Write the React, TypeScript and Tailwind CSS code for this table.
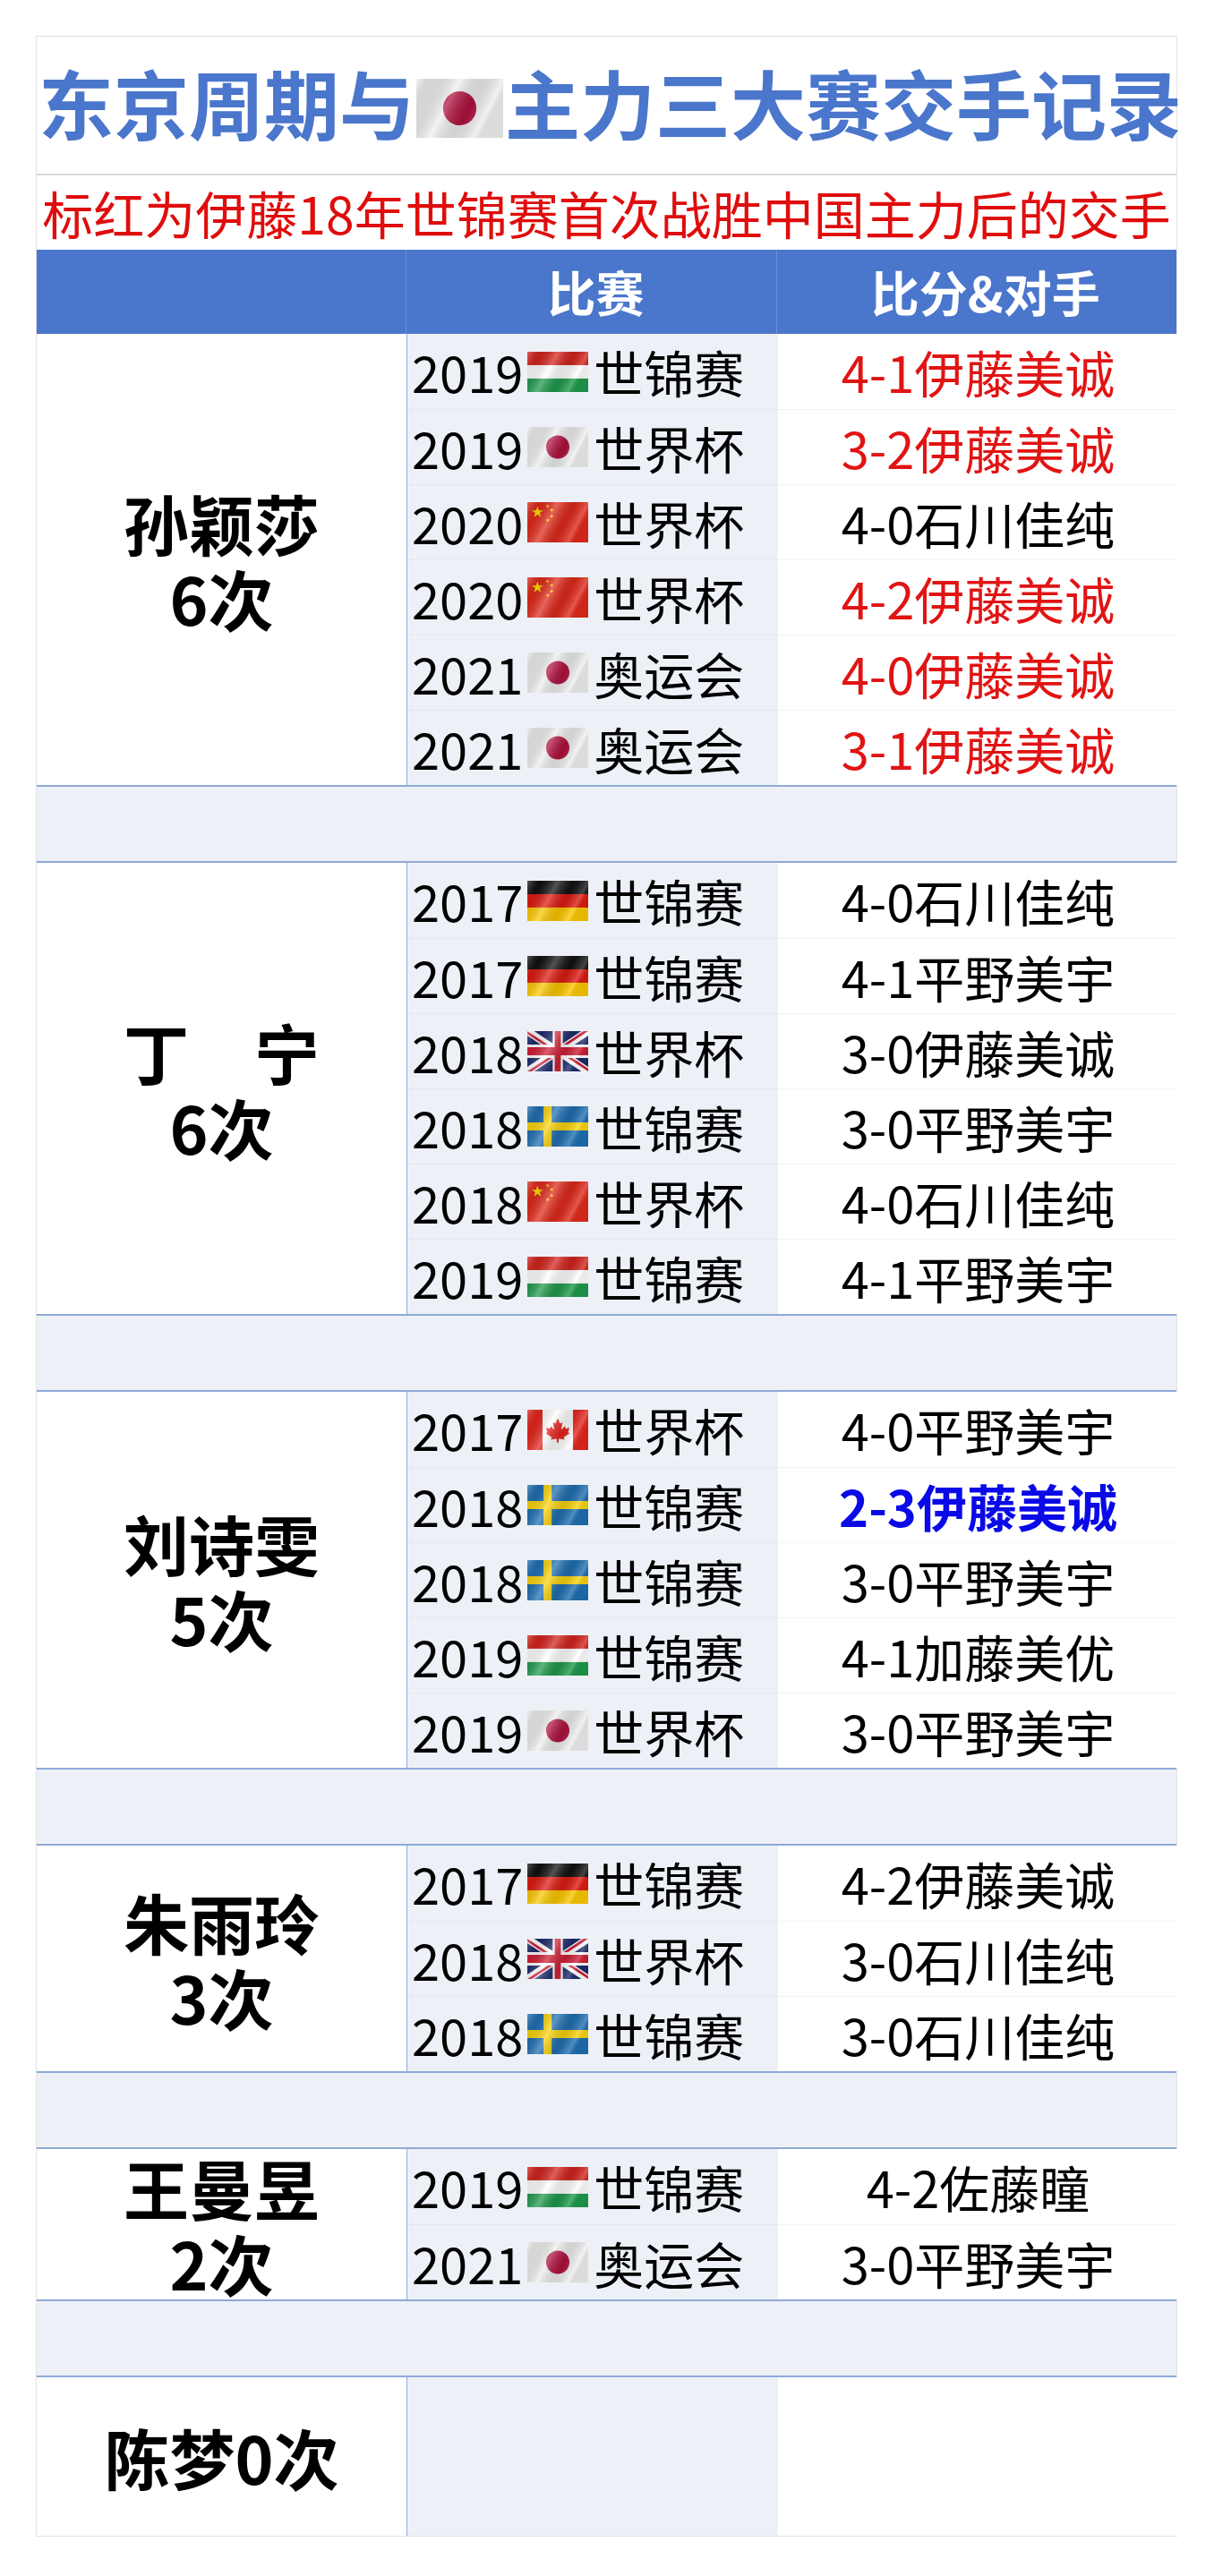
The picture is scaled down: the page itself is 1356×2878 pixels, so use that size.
import { useId } from "react";

type FlagCode = "hu" | "jp" | "cn" | "de" | "gb" | "se" | "ca";

type Match = {
  year: string;
  flag: FlagCode;
  event: string;
  score: string;
  tone?: "red" | "blue";
};

type Player = {
  name: string[];
  matches: Match[];
};

const players: Player[] = [
  {
    name: ["孙颖莎", "6次"],
    matches: [
      { year: "2019", flag: "hu", event: "世锦赛", score: "4-1伊藤美诚", tone: "red" },
      { year: "2019", flag: "jp", event: "世界杯", score: "3-2伊藤美诚", tone: "red" },
      { year: "2020", flag: "cn", event: "世界杯", score: "4-0石川佳纯" },
      { year: "2020", flag: "cn", event: "世界杯", score: "4-2伊藤美诚", tone: "red" },
      { year: "2021", flag: "jp", event: "奥运会", score: "4-0伊藤美诚", tone: "red" },
      { year: "2021", flag: "jp", event: "奥运会", score: "3-1伊藤美诚", tone: "red" },
    ],
  },
  {
    name: ["丁\u3000宁", "6次"],
    matches: [
      { year: "2017", flag: "de", event: "世锦赛", score: "4-0石川佳纯" },
      { year: "2017", flag: "de", event: "世锦赛", score: "4-1平野美宇" },
      { year: "2018", flag: "gb", event: "世界杯", score: "3-0伊藤美诚" },
      { year: "2018", flag: "se", event: "世锦赛", score: "3-0平野美宇" },
      { year: "2018", flag: "cn", event: "世界杯", score: "4-0石川佳纯" },
      { year: "2019", flag: "hu", event: "世锦赛", score: "4-1平野美宇" },
    ],
  },
  {
    name: ["刘诗雯", "5次"],
    matches: [
      { year: "2017", flag: "ca", event: "世界杯", score: "4-0平野美宇" },
      { year: "2018", flag: "se", event: "世锦赛", score: "2-3伊藤美诚", tone: "blue" },
      { year: "2018", flag: "se", event: "世锦赛", score: "3-0平野美宇" },
      { year: "2019", flag: "hu", event: "世锦赛", score: "4-1加藤美优" },
      { year: "2019", flag: "jp", event: "世界杯", score: "3-0平野美宇" },
    ],
  },
  {
    name: ["朱雨玲", "3次"],
    matches: [
      { year: "2017", flag: "de", event: "世锦赛", score: "4-2伊藤美诚" },
      { year: "2018", flag: "gb", event: "世界杯", score: "3-0石川佳纯" },
      { year: "2018", flag: "se", event: "世锦赛", score: "3-0石川佳纯" },
    ],
  },
  {
    name: ["王曼昱", "2次"],
    matches: [
      { year: "2019", flag: "hu", event: "世锦赛", score: "4-2佐藤瞳" },
      { year: "2021", flag: "jp", event: "奥运会", score: "3-0平野美宇" },
    ],
  },
];

function star(cx: number, cy: number, r: number) {
  return Array.from({ length: 10 }, (_, i) => {
    const a = -Math.PI / 2 + (i * Math.PI) / 5;
    const rr = i % 2 ? r * 0.382 : r;
    return `${(cx + rr * Math.cos(a)).toFixed(2)},${(cy + rr * Math.sin(a)).toFixed(2)}`;
  }).join(" ");
}

function Flag({ code, w = 68, h = 45 }: { code: FlagCode; w?: number; h?: number }) {
  const id = useId().replace(/:/g, "");
  return (
    <svg width={w} height={h} viewBox="0 0 60 40" preserveAspectRatio="none" className="shrink-0">
      <defs>
        <linearGradient id={`wave${id}`} x1="0" y1="0" x2="1" y2="0.35">
          <stop offset="0" stopColor="#fff" stopOpacity="0.3" />
          <stop offset="0.2" stopColor="#000" stopOpacity="0.1" />
          <stop offset="0.45" stopColor="#fff" stopOpacity="0.28" />
          <stop offset="0.7" stopColor="#000" stopOpacity="0.12" />
          <stop offset="0.9" stopColor="#fff" stopOpacity="0.22" />
          <stop offset="1" stopColor="#000" stopOpacity="0.08" />
        </linearGradient>
        <clipPath id={`s${id}`}>
          <path d="M0,0 v30 h60 v-30 z" />
        </clipPath>
        <clipPath id={`t${id}`}>
          <path d="M30,15 h30 v15 z v15 h-30 z h-30 v-15 z v-15 h30 z" />
        </clipPath>
      </defs>
      {code === "hu" && (
        <>
          <rect x="0" y="0" width="60" height="13.4" fill="#d3231c" />
          <rect x="0" y="13.3" width="60" height="13.4" fill="#ffffff" />
          <rect x="0" y="26.6" width="60" height="13.4" fill="#1e9a4c" />
        </>
      )}
      {code === "de" && (
        <>
          <rect x="0" y="0" width="60" height="13.4" fill="#111111" />
          <rect x="0" y="13.3" width="60" height="13.4" fill="#dd1a10" />
          <rect x="0" y="26.6" width="60" height="13.4" fill="#fcc800" />
        </>
      )}
      {code === "jp" && (
        <>
          <rect x="0" y="0" width="60" height="40" fill="#efefef" />
          <circle cx="30" cy="20" r="11.5" fill="#b0113e" />
        </>
      )}
      {code === "cn" && (
        <>
          <rect x="0" y="0" width="60" height="40" fill="#e0291a" />
          <polygon points={star(10, 10, 6)} fill="#ffdd00" />
          <polygon points={star(20, 4, 2)} fill="#ffdd00" />
          <polygon points={star(24, 8, 2)} fill="#ffdd00" />
          <polygon points={star(24, 14, 2)} fill="#ffdd00" />
          <polygon points={star(20, 18, 2)} fill="#ffdd00" />
        </>
      )}
      {code === "se" && (
        <>
          <rect x="0" y="0" width="60" height="40" fill="#1f6fb2" />
          <rect x="16" y="0" width="8" height="40" fill="#fbd40c" />
          <rect x="0" y="16" width="60" height="8" fill="#fbd40c" />
        </>
      )}
      {code === "ca" && (
        <>
          <rect x="0" y="0" width="60" height="40" fill="#ffffff" />
          <rect x="0" y="0" width="15" height="40" fill="#e5251d" />
          <rect x="45" y="0" width="15" height="40" fill="#e5251d" />
          <path
            transform="translate(30,20) scale(1.15)"
            d="M0,-10 L2,-5.5 L4,-6.5 L3,0 L6,-3 L7,-1 L10,-2 L9,2 L10,3 L5,6.5 L6,8.5 L1,7.5 L0.6,11 L-0.6,11 L-1,7.5 L-6,8.5 L-5,6.5 L-10,3 L-9,2 L-10,-2 L-7,-1 L-6,-3 L-3,0 L-4,-6.5 L-2,-5.5 Z"
            fill="#e5251d"
          />
        </>
      )}
      {code === "gb" && (
        <g transform="scale(1,1.3333)">
          <g clipPath={`url(#s${id})`}>
            <path d="M0,0 v30 h60 v-30 z" fill="#1c2a6b" />
            <path d="M0,0 L60,30 M60,0 L0,30" stroke="#fff" strokeWidth="6" />
            <path d="M0,0 L60,30 M60,0 L0,30" clipPath={`url(#t${id})`} stroke="#cf1f36" strokeWidth="4" />
            <path d="M30,0 v30 M0,15 h60" stroke="#fff" strokeWidth="10" />
            <path d="M30,0 v30 M0,15 h60" stroke="#cf1f36" strokeWidth="6" />
          </g>
        </g>
      )}
      <rect x="0" y="0" width="60" height="40" fill={`url(#wave${id})`} />
    </svg>
  );
}

function Block({ player }: { player: Player }) {
  return (
    <div className="flex">
      <div className="w-[414px] shrink-0 flex items-center justify-center border-r border-[#8ea7d4] bg-white">
        <div className="text-center text-[73px] font-bold leading-[84px] text-black whitespace-nowrap">
          {player.name[0]}
          <br />
          {player.name[1]}
        </div>
      </div>
      <div className="w-[414px] shrink-0 flex flex-col bg-[#edf1f7]">
        {player.matches.map((m, i) => (
          <div
            key={i}
            className={`h-[84px] flex items-center pl-[5px] text-[56px] leading-none text-black whitespace-nowrap ${
              i > 0 ? "border-t border-[#e3e8f0]" : ""
            }`}
          >
            <span>{m.year}</span>
            <span className="ml-[5px] mr-[6px] flex">
              <Flag code={m.flag} />
            </span>
            <span>{m.event}</span>
          </div>
        ))}
      </div>
      <div className="w-[447px] shrink-0 flex flex-col bg-white">
        {player.matches.map((m, i) => (
          <div
            key={i}
            className={`h-[84px] flex items-center justify-center text-[56px] leading-none whitespace-nowrap ${
              i > 0 ? "border-t border-[#f3f4f6]" : ""
            } ${
              m.tone === "red"
                ? "text-[#e11414]"
                : m.tone === "blue"
                  ? "text-[#0a0ae6] font-bold"
                  : "text-black"
            }`}
          >
            {m.score}
          </div>
        ))}
      </div>
    </div>
  );
}

function Spacer() {
  return <div className="h-[87px] bg-[#edf1f7] border-y-2 border-[#8ea9d8]" />;
}

export default function App() {
  return (
    <div className="w-[1356px] min-h-[2878px] bg-white pt-[40px] pl-[40px] font-['Noto_Sans_CJK_SC','Noto_Sans',sans-serif]">
      <div className="w-[1275px] border-x border-[#e2e2e2]">
        <div className="h-[154px] border-t border-[#e0e0e0] flex items-center justify-center pb-[8px] pl-[8px] text-[84px] font-bold leading-none text-[#4a76cc] whitespace-nowrap">
          <span className="shrink-0">东京周期与</span>
          <span className="mt-[14px] mx-[2px] flex shrink-0">
            <Flag code="jp" w={97} h={66} />
          </span>
          <span className="shrink-0">主力三大赛交手记录</span>
        </div>
        <div className="h-[85px] border-t-2 border-[#d9d9d9] flex items-center justify-center text-[57px] leading-none text-[#df0d0d] whitespace-nowrap">
          标红为伊藤18年世锦赛首次战胜中国主力后的交手
        </div>
        <div className="h-[94px] flex bg-[#4a76cc] text-[54px] font-bold leading-none text-white">
          <div className="w-[414px] border-r border-[#6d8fd4]" />
          <div className="w-[414px] border-r border-[#6d8fd4] flex items-center justify-center pl-[10px]">
            比赛
          </div>
          <div className="w-[447px] flex items-center justify-center pl-[20px]">比分&amp;对手</div>
        </div>
        {players.map((p) => (
          <div key={p.name[0]}>
            <Block player={p} />
            <Spacer />
          </div>
        ))}
        <div className="flex h-[178px] border-b border-[#dde3ec]">
          <div className="w-[414px] shrink-0 flex items-center justify-center border-r border-[#8ea7d4] bg-white text-[73px] font-bold leading-none text-black whitespace-nowrap">
            陈梦0次
          </div>
          <div className="w-[414px] shrink-0 bg-[#edf1f7]" />
          <div className="w-[447px] shrink-0 bg-white" />
        </div>
      </div>
    </div>
  );
}
